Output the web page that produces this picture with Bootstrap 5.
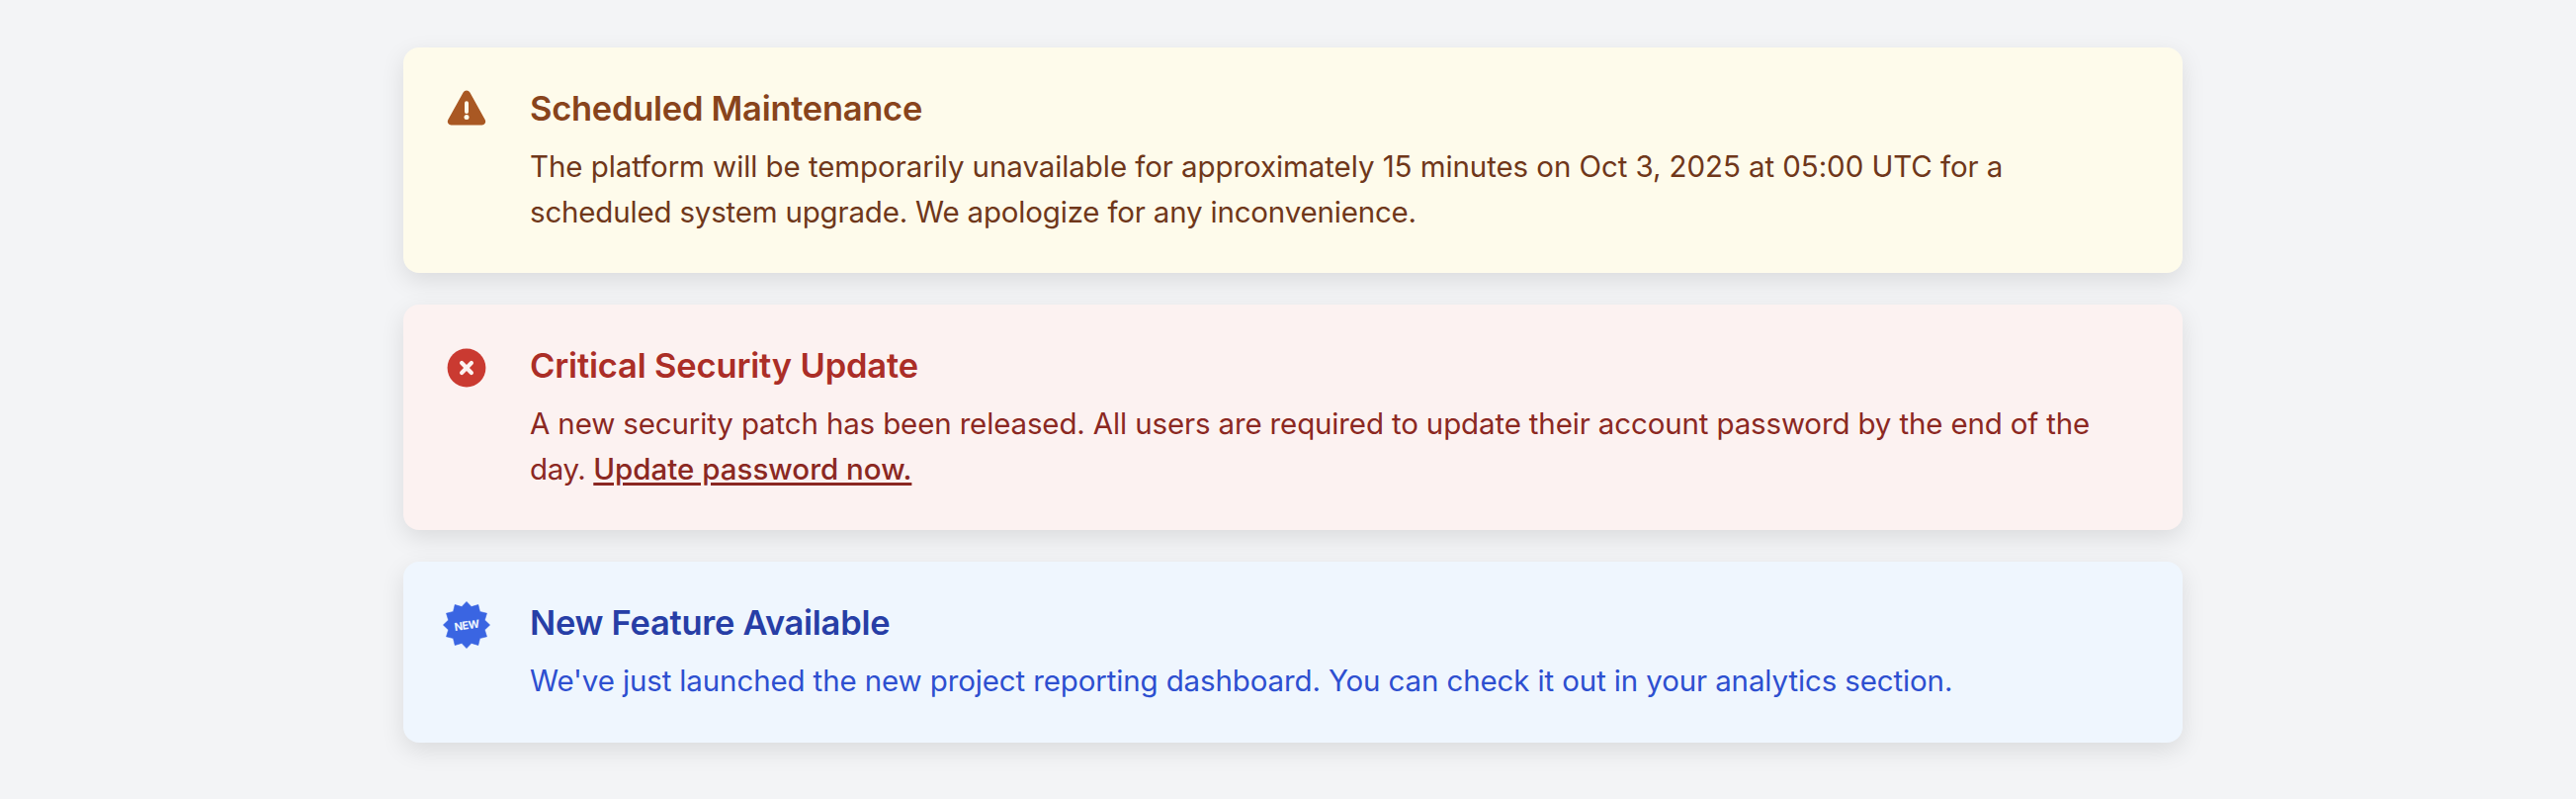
<!DOCTYPE html>
<html lang="en">

<head>
    <meta charset="UTF-8">
    <meta name="viewport" content="width=device-width, initial-scale=1.0">
    <title>Announcements</title>
    <link rel="stylesheet" href="https://cdn.jsdelivr.net/npm/bootstrap@5.3.0/dist/css/bootstrap.min.css">
    <style>
        body {
            padding-left: 10px;
            background-color: #f3f4f6;
            font-family: Inter, "Liberation Sans", sans-serif;
        }

        .notice-list {
            width: 1800px;
            gap: 32px;
            padding: 48px 0;
        }

        .notice {
            gap: 40px;
            padding: 40px 40px 39px;
            border-radius: 16px;
            box-shadow: 0 8px 24px rgba(0, 0, 0, 0.1);
        }

        .notice-icon {
            width: 48px;
            height: 48px;
        }

        .notice-title {
            margin-bottom: 13px;
            font-size: 34.5px;
            font-weight: 600;
            line-height: 44px;
            letter-spacing: -0.28px;
        }

        .notice-text {
            font-size: 29.5px;
            line-height: 46px;
            letter-spacing: -0.13px;
        }

        .notice-warning { background-color: #fefbeb; color: #6f371a; }
        .notice-warning .notice-title { color: #88441c; }
        .notice-warning .notice-icon { color: #a95823; }
        .notice-warning .line-first { letter-spacing: -0.08px; }
        .notice-warning .line-last { letter-spacing: -0.19px; }

        .notice-critical { background-color: #fcf2f1; color: #8b2822; }
        .notice-critical .notice-title { color: #ab2e27; letter-spacing: -0.18px; }
        .notice-critical .notice-icon { color: #ca3a31; }
        .notice-critical .line-first { letter-spacing: -0.145px; }
        .notice-critical .line-last { letter-spacing: -0.4px; }

        .notice-feature { padding-bottom: 40px; background-color: #eff6fe; color: #2d4fd0; }
        .notice-feature .notice-title { color: #273ea6; }
        .notice-feature .notice-icon { color: #3a65e2; }

        .notice-link {
            color: inherit;
            font-weight: 500;
            letter-spacing: 0;
            text-decoration-thickness: 3px;
            text-underline-offset: 3px;
        }

        .notice-link:hover {
            color: #ab2e27;
        }
    </style>
</head>

<body>
    <main class="notice-list d-flex flex-column mx-auto">
        <div class="notice notice-warning d-flex align-items-start">
            <svg class="notice-icon flex-shrink-0" viewBox="0 0 48 48" fill="currentColor" aria-hidden="true">
                <path d="M20.6 5.6a3.9 3.9 0 0 1 6.8 0L42.8 33.2a3.7 3.7 0 0 1-3.3 5.4H8.5a3.7 3.7 0 0 1-3.3-5.4z" />
                <path d="M24 16.3v8.6" stroke="#fefbeb" stroke-width="4" stroke-linecap="round" />
                <circle cx="24" cy="30.5" r="2.5" fill="#fefbeb" />
            </svg>
            <div>
                <h2 class="notice-title">Scheduled Maintenance</h2>
                <p class="notice-text mb-0">
                    <span class="line-first">The platform will be temporarily unavailable for approximately 15 minutes on Oct 3, 2025 at 05:00 UTC for a</span><br>
                    <span class="line-last">scheduled system upgrade. We apologize for any inconvenience.</span>
                </p>
            </div>
        </div>

        <div class="notice notice-critical d-flex align-items-start">
            <svg class="notice-icon flex-shrink-0" viewBox="0 0 48 48" fill="currentColor" aria-hidden="true">
                <circle cx="24" cy="24" r="19.4" />
                <path d="M19.1 19.1l9.8 9.8m0-9.8l-9.8 9.8" stroke="#fcf2f1" stroke-width="4.2" stroke-linecap="round" />
            </svg>
            <div>
                <h2 class="notice-title">Critical Security Update</h2>
                <p class="notice-text mb-0">
                    <span class="line-first">A new security patch has been released. All users are required to update their account password by the end of the</span><br>
                    <span class="line-last">day. <a class="notice-link" href="#">Update password now.</a></span>
                </p>
            </div>
        </div>

        <div class="notice notice-feature d-flex align-items-start">
            <svg class="notice-icon flex-shrink-0" viewBox="0 0 48 48" fill="currentColor" aria-hidden="true">
                <polygon stroke="currentColor" stroke-width="0.6" stroke-linejoin="round"
                    points="24,.4 28.9,5.6 35.8,3.5 37.5,10.5 44.5,12.2 42.4,19.1 47.6,24 42.4,28.9 44.5,35.8 37.5,37.5 35.8,44.5 28.9,42.4 24,47.6 19.1,42.4 12.2,44.5 10.5,37.5 3.5,35.8 5.6,28.9 .4,24 5.6,19.1 3.5,12.2 10.5,10.5 12.2,3.5 19.1,5.6" />
                <text x="24" y="28.2" transform="rotate(-8 24 24)" text-anchor="middle" font-size="11" font-weight="700" letter-spacing="-0.5" fill="#eff6fe">NEW</text>
            </svg>
            <div>
                <h2 class="notice-title">New Feature Available</h2>
                <p class="notice-text mb-0">We've just launched the new project reporting dashboard. You can check it out in your analytics section.</p>
            </div>
        </div>
    </main>

    <script src="https://cdn.jsdelivr.net/npm/bootstrap@5.3.0/dist/js/bootstrap.bundle.min.js"></script>
</body>

</html>
